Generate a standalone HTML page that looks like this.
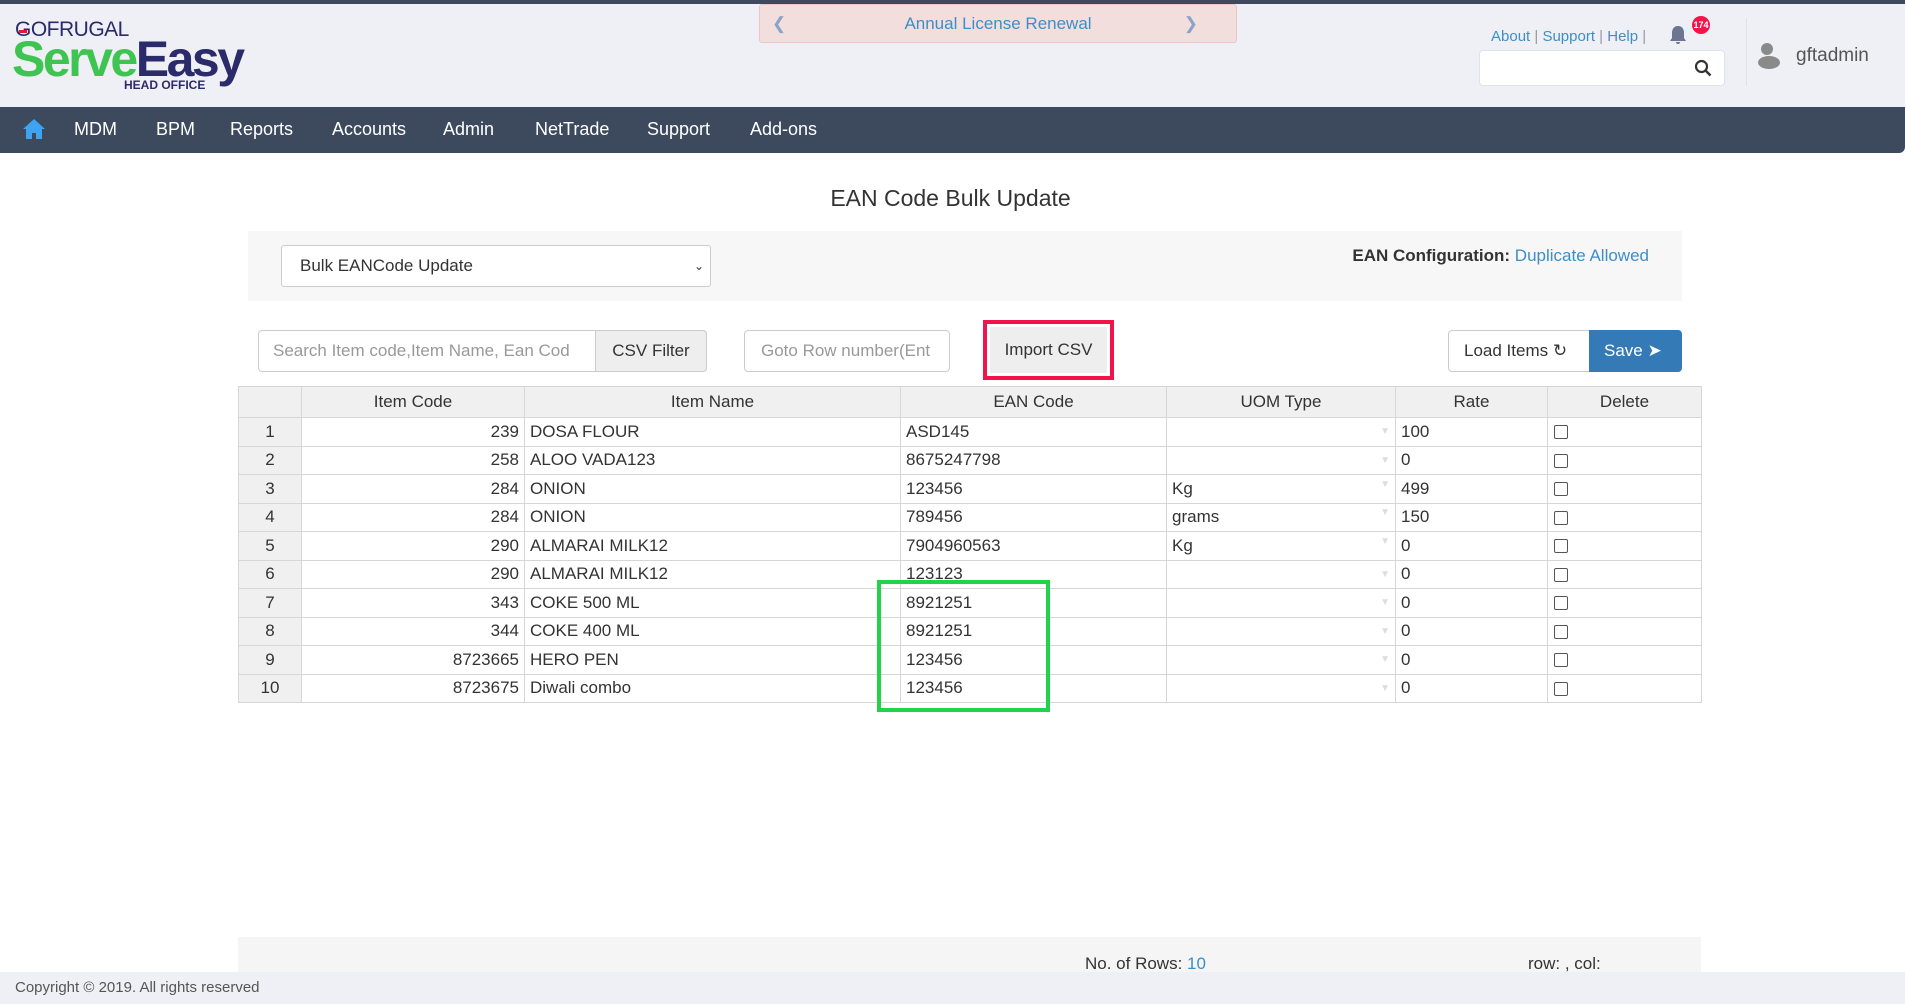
<!DOCTYPE html>
<html><head><meta charset="utf-8"><style>
*{box-sizing:border-box;margin:0;padding:0}
body{width:1905px;height:1004px;overflow:hidden;background:#fff;font-family:"Liberation Sans",sans-serif;position:relative;color:#333}
.abs{position:absolute}
.top{left:0;top:0;width:1905px;height:4px;background:#3d4a5e}
.hdr{left:0;top:4px;width:1905px;height:103px;background:#eff0f5}
.nav{left:0;top:107px;width:1905px;height:46px;background:#3d4a5e;border-radius:0 0 6px 0}
.nav span{position:absolute;top:12px;color:#fff;font-size:18px}
.banner{left:759px;top:4px;width:478px;height:39px;background:#f3dede;border:1px solid #eac6c6;border-radius:3px;color:#3d8ec9;font-size:17px;text-align:center;line-height:37px}
.lnk{color:#3d8ec9;font-size:15px}
table{border-collapse:collapse;position:absolute;left:238px;top:386px;font-size:17px}
td,th{border:1px solid #d6d6d6;height:28.5px;padding:0 5px;font-weight:normal;white-space:nowrap}
th{background:#f0f0f0;height:31px;text-align:center}
td.n{text-align:center;background:#f0f0f0}
td.r{text-align:right}
.cb{display:inline-block;width:14px;height:14px;border:1px solid #555;border-radius:2px;margin-left:1px;vertical-align:middle}
.dd{float:right;color:#ddd;font-size:10px}
</style></head><body>
<div class="abs top"></div>
<div class="abs hdr"></div>
<div class="abs" style="left:15px;top:18px;font-size:21px;color:#2b2a6b;letter-spacing:-0.5px"><span style="position:relative">G<span style="position:absolute;left:4px;top:12px;width:8px;height:3px;background:#e8173a"></span></span>OFRUGAL</div>
<div class="abs" style="left:12px;top:33px;font-size:50px;font-weight:bold;letter-spacing:-2.5px;line-height:52px"><span style="color:#3fc451">Serve</span><span style="color:#2b2a6b">Easy</span></div>
<div class="abs" style="left:124px;top:78px;font-size:12px;font-weight:bold;color:#2b2a6b">HEAD OFFICE</div>
<div class="abs banner"><span style="position:absolute;left:12px;color:#8aa3c8">&#10094;</span>Annual License Renewal<span style="position:absolute;right:38px;color:#8aa3c8">&#10095;</span></div>
<div class="abs lnk" style="left:1491px;top:28px">About <span style="color:#999">|</span> Support <span style="color:#999">|</span> Help <span style="color:#999">|</span></div>
<svg class="abs" style="left:1669px;top:25px" width="18" height="20" viewBox="0 0 18 20"><path d="M9 1c-4 0-6 3-6 7v5l-2 3h16l-2-3V8c0-4-2-7-6-7zM7 17h4a2 2 0 0 1-4 0z" fill="#6d7592"/></svg>
<div class="abs" style="left:1692px;top:16px;width:18px;height:18px;border-radius:50%;background:#f0144a;color:#fff;font-size:9px;font-weight:bold;text-align:center;line-height:18px">174</div>
<div class="abs" style="left:1479px;top:50px;width:246px;height:36px;background:#fff;border:1px solid #dde3ea;border-radius:4px"></div>
<svg class="abs" style="left:1694px;top:59px" width="18" height="18" viewBox="0 0 18 18"><circle cx="7.5" cy="7.5" r="5.5" stroke="#333" stroke-width="2.2" fill="none"/><path d="M11.5 11.5l5 5" stroke="#333" stroke-width="2.5"/></svg>
<div class="abs" style="left:1746px;top:18px;width:1px;height:68px;background:#dde3ea"></div>
<div class="abs" style="left:1761px;top:43px;width:12px;height:12px;border-radius:50%;background:#8a8a8a"></div>
<div class="abs" style="left:1758px;top:56px;width:22px;height:13px;border-radius:50%;background:#8a8a8a"></div>
<div class="abs" style="left:1796px;top:45px;font-size:19px;color:#555">gftadmin</div>
<div class="abs nav">
<svg style="position:absolute;left:22px;top:11px" width="24" height="22" viewBox="0 0 24 22"><path d="M12 1L1 11h3v10h6v-6h4v6h6V11h3z" fill="#3ea3f0"/></svg>
<span style="left:74px">MDM</span><span style="left:156px">BPM</span><span style="left:230px">Reports</span><span style="left:332px">Accounts</span><span style="left:443px">Admin</span><span style="left:535px">NetTrade</span><span style="left:647px">Support</span><span style="left:750px">Add-ons</span>
</div>
<div class="abs" style="left:0;top:185px;width:1905px;text-align:center;font-size:23px;color:#333;margin-left:-2px">EAN Code Bulk Update</div>
<div class="abs" style="left:248px;top:231px;width:1434px;height:70px;background:#f7f7f7"></div>
<div class="abs" style="left:281px;top:245px;width:430px;height:42px;background:#fff;border:1px solid #ccc;border-radius:3px;font-size:17px;line-height:40px;padding-left:18px">Bulk EANCode Update<span style="position:absolute;right:6px;font-size:12px">&#8964;</span></div>
<div class="abs" style="right:256px;top:246px;font-size:17px"><b>EAN Configuration:</b> <span style="color:#3d8ec9">Duplicate Allowed</span></div>
<div class="abs" style="left:258px;top:330px;width:449px;height:42px;border:1px solid #ccc;border-radius:4px;font-size:17px;color:#999;line-height:40px;padding-left:14px;overflow:hidden">Search Item code,Item Name, Ean Cod</div>
<div class="abs" style="left:595px;top:330px;width:112px;height:42px;background:#eee;border:1px solid #ccc;border-radius:0 4px 4px 0;font-size:17px;line-height:40px;text-align:center">CSV Filter</div>
<div class="abs" style="left:744px;top:330px;width:206px;height:42px;border:1px solid #ccc;border-radius:4px;font-size:17px;color:#999;line-height:40px;padding-left:16px;overflow:hidden;white-space:nowrap">Goto Row number(Ent</div>
<div class="abs" style="left:983px;top:320px;width:131px;height:60px;border:4px solid #f0144a;background:#fff"><div style="margin:3px;height:46px;background:#eee;font-size:17px;line-height:46px;text-align:center">Import CSV</div></div>
<div class="abs" style="left:1448px;top:330px;width:142px;height:42px;border:1px solid #ccc;border-radius:4px 0 0 4px;font-size:17px;line-height:40px;padding-left:15px">Load Items &#8635;</div>
<div class="abs" style="left:1589px;top:330px;width:93px;height:42px;background:#337ab7;border-radius:0 4px 4px 0;color:#fff;font-size:17px;line-height:42px;padding-left:15px">Save &#10148;</div>
<table>
<tr><th style="width:63px"></th><th style="width:223px">Item Code</th><th style="width:376px">Item Name</th><th style="width:266px">EAN Code</th><th style="width:229px">UOM Type</th><th style="width:152px">Rate</th><th style="width:154px">Delete</th></tr>
<tr><td class="n">1</td><td class="r">239</td><td>DOSA FLOUR</td><td>ASD145</td><td><span class="dd">▼</span></td><td>100</td><td><span class="cb"></span></td></tr>
<tr><td class="n">2</td><td class="r">258</td><td>ALOO VADA123</td><td>8675247798</td><td><span class="dd">▼</span></td><td>0</td><td><span class="cb"></span></td></tr>
<tr><td class="n">3</td><td class="r">284</td><td>ONION</td><td>123456</td><td>Kg<span class="dd">▼</span></td><td>499</td><td><span class="cb"></span></td></tr>
<tr><td class="n">4</td><td class="r">284</td><td>ONION</td><td>789456</td><td>grams<span class="dd">▼</span></td><td>150</td><td><span class="cb"></span></td></tr>
<tr><td class="n">5</td><td class="r">290</td><td>ALMARAI MILK12</td><td>7904960563</td><td>Kg<span class="dd">▼</span></td><td>0</td><td><span class="cb"></span></td></tr>
<tr><td class="n">6</td><td class="r">290</td><td>ALMARAI MILK12</td><td>123123</td><td><span class="dd">▼</span></td><td>0</td><td><span class="cb"></span></td></tr>
<tr><td class="n">7</td><td class="r">343</td><td>COKE 500 ML</td><td>8921251</td><td><span class="dd">▼</span></td><td>0</td><td><span class="cb"></span></td></tr>
<tr><td class="n">8</td><td class="r">344</td><td>COKE 400 ML</td><td>8921251</td><td><span class="dd">▼</span></td><td>0</td><td><span class="cb"></span></td></tr>
<tr><td class="n">9</td><td class="r">8723665</td><td>HERO PEN</td><td>123456</td><td><span class="dd">▼</span></td><td>0</td><td><span class="cb"></span></td></tr>
<tr><td class="n">10</td><td class="r">8723675</td><td>Diwali combo</td><td>123456</td><td><span class="dd">▼</span></td><td>0</td><td><span class="cb"></span></td></tr>
</table>
<div class="abs" style="left:877px;top:580px;width:173px;height:132px;border:4px solid #22d24a"></div>
<div class="abs" style="left:238px;top:937px;width:1463px;height:35px;background:#f5f5f5"></div>
<div class="abs" style="left:1085px;top:954px;font-size:17px">No. of Rows: <span style="color:#3d8ec9">10</span></div>
<div class="abs" style="left:1528px;top:954px;font-size:17px">row: , col:</div>
<div class="abs" style="left:0;top:972px;width:1905px;height:32px;background:#eff0f5;font-size:15px;color:#555;line-height:32px;padding-left:15px">Copyright © 2019. All rights reserved</div>
</body></html>
